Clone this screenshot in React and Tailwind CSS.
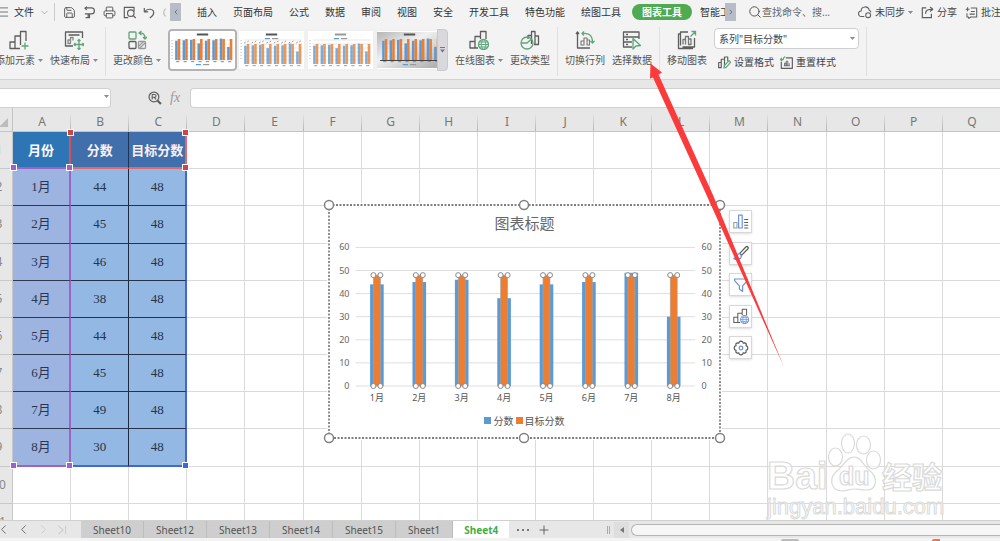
import { Fragment } from "react";
import { ChevronDown, ChevronLeft, ChevronRight, Menu, Plus, Printer, Save, Search } from "lucide-react";

const COLUMNS = ["A", "B", "C", "D", "E", "F", "G", "H", "I", "J", "K", "L", "M", "N", "O", "P", "Q"];

const SCORES = [
  { month: "1月", score: 44, target: 48 },
  { month: "2月", score: 45, target: 48 },
  { month: "3月", score: 46, target: 48 },
  { month: "4月", score: 38, target: 48 },
  { month: "5月", score: 44, target: 48 },
  { month: "6月", score: 45, target: 48 },
  { month: "7月", score: 49, target: 48 },
  { month: "8月", score: 30, target: 48 },
];

const Caret = ({ className = "" }) => (
  <svg width="5" height="3" viewBox="0 0 5 3" className={className} aria-hidden="true">
    <path d="M0 0h5L2.5 3z" fill="#8a8a8a" />
  </svg>
);

const Icon = ({ size = 20, children, className = "" }) => (
  <svg
    width={size}
    height={size}
    viewBox="0 0 20 20"
    fill="none"
    stroke="#5e5e5e"
    strokeWidth="1.3"
    strokeLinejoin="round"
    className={`shrink-0 ${className}`}
    aria-hidden="true"
  >
    {children}
  </svg>
);

const GREEN = "#5fa57c";

const AddElementIcon = () => (
  <Icon>
    <path d="M1 18.500V12h5v6.500zM6 18.500V6h5.500v9M11.500 12V1.500H17V11M6 18.500h5" />
    <path d="M16 12.500v7M12.500 16h7" stroke={GREEN} />
  </Icon>
);

const LayoutIcon = () => (
  <Icon>
    <path d="M9 16H1.500V2h17v6M4.500 5h11" />
    <path d="M4 13.500V10h2.500v3.500zM6.500 13.500v-6H9v3" stroke="#888" />
    <path d="M15 9.500v10M10 14.500h10M13.500 11l1.500-1.500 1.500 1.500M13.500 18l1.500 1.500 1.500-1.500M11.500 13L10 14.500l1.500 1.500M18.500 13l1.500 1.500-1.500 1.500" stroke={GREEN} />
  </Icon>
);

const ColorIcon = () => (
  <Icon>
    <rect x="2" y="2" width="7" height="7" rx="1" stroke={GREEN} />
    <path d="M12 3c4-.5 6 1.500 6 5.500M14.500 1L12 3l2.500 2M16 7l2 2 2-2" stroke={GREEN} />
    <rect x="2" y="11.500" width="7" height="7" rx="1" />
    <rect x="11.500" y="11.500" width="7" height="7" rx="1" stroke="#999" />
    <path d="M12 16l4.500-4.500M12.500 18.500l6-6" stroke="#999" />
  </Icon>
);

const GlobeChartIcon = ({ accent = GREEN }) => (
  <Icon>
    <path d="M9 18H1v-6.500h5M6 17.500v-11h5.500V9M11.500 8V1.500h5.500V9" />
    <circle cx="14.500" cy="14.500" r="5" stroke={accent} />
    <path d="M9.500 14.500h10M14.500 9.500c-3 3-3 7 0 10M14.500 9.500c3 3 3 7 0 10M10.500 12h8M10.500 17h8" stroke={accent} strokeWidth="1" />
  </Icon>
);

const ChangeTypeIcon = () => (
  <Icon>
    <path d="M8 9V5.500h3.500V14M11.500 12V1.500H15V14M15 6h3.500v8.500H14" />
    <circle cx="7" cy="13" r="6" stroke={GREEN} />
    <path d="M1 13h6l4.500-4" stroke={GREEN} />
  </Icon>
);

const SwapIcon = () => (
  <Icon>
    <path d="M2.500 2v16H15M1 4l1.500-2L4 4" />
    <path d="M6 15v-4h3v4zM9 15V8h3v7M12 15v-5h2.500v5z" stroke="#777" strokeWidth="1.100" />
    <path d="M7 3.500c7-1 10.500 2 10.500 9M9 1.500L7 3.500l2 2M15.500 11l2 2 2-2" stroke={GREEN} />
  </Icon>
);

const SelectDataIcon = () => (
  <Icon>
    <path d="M10 17H1.500V2h15.500v7M1.500 7H17M1.500 12H10M4 4.500h2M4 9.500h2M4 14.500h2" />
    <path d="M11 8.500v10.500l3-3 4.500-.5z" stroke={GREEN} fill="#f3f3f3" />
  </Icon>
);

const MoveIcon = () => (
  <Icon>
    <path d="M11 2H3.500v13.500M17.500 8v9H5.500M3.500 4H1.500v14.500h14V17" />
    <path d="M6 14.500v-5h2.500v5M8.500 14.500v-8h3v8M11.500 14.500V9H14v5.500z" stroke="#777" />
    <path d="M13.500 6.500L18.500 1.500M14.500 1.500h4v4" stroke={GREEN} />
  </Icon>
);

const FormatIcon = () => (
  <Icon size={13}>
    <path d="M1 18v-8h4v8zM5 18V5h5v11M10 14V1.500h5V8" strokeWidth="1.800" />
    <path d="M9 18.500l1-4 7-7.500 2.500 2.500-7 8z" stroke={GREEN} strokeWidth="1.800" />
  </Icon>
);

const ResetIcon = () => (
  <Icon size={13}>
    <path d="M9 3h10v16H2V9" strokeWidth="1.800" />
    <path d="M6 15h9M7 15v-4h2.500v4M9.500 15V8H12v7M14 15v-4" strokeWidth="1.300" />
    <path d="M1 5.500h4c0-3 1-4 3-4.500M3 3L.5 5.500 3 8" stroke={GREEN} strokeWidth="1.800" />
  </Icon>
);

const ToolButton = ({ label, icon: ToolIcon, menu }) => (
  <button className="flex shrink-0 flex-col items-center gap-0.5 pt-1.5 text-[10px] leading-4 text-[#555] whitespace-nowrap">
    <ToolIcon />
    <span className="flex items-center gap-[3px]">
      {label}
      {menu && <Caret />}
    </span>
  </button>
);

const Divider = () => <div className="mt-[3px] h-[49px] w-px shrink-0 bg-[#e0e0e0]" />;

// small preview of the clustered columns, used by the style gallery
const Preview = ({ variant }) => {
  const dark = variant === "dark";
  const legendTop = variant === "labels" || variant === "light";
  const opacity = legendTop ? 0.8 : 1;
  return (
    <svg viewBox="0 0 63 36" className="h-9 w-full" preserveAspectRatio="none" aria-hidden="true">
      <defs>
        <linearGradient id="previewShade" x1="0" y1="0" x2="1" y2="1">
          <stop offset="0" stopColor="#b5b5b5" />
          <stop offset="0.4" stopColor="#f0f0f0" />
          <stop offset="1" stopColor="#a8a8a8" />
        </linearGradient>
      </defs>
      <rect width="63" height="36" fill={dark ? "url(#previewShade)" : "#fff"} />
      <rect x="26" y="1.500" width="11" height="2" fill="#555" opacity={variant === "light" ? 0.6 : 1} />
      {[8, 12, 16, 20, 24, 28].map((y) => (
        <path key={y} d={`M5 ${y}h56`} stroke="#d9d9d9" strokeWidth="0.600" />
      ))}
      {!dark && <path d="M2 8v20" stroke="#bbb" strokeDasharray="1 2" />}
      {SCORES.map((row, i) => {
        const top = legendTop ? 12 : 7;
        const bottom = legendTop ? 32 : 28;
        const scale = (bottom - top) / 48;
        const x = 5 + i * 7.2;
        return (
          <g key={row.month} opacity={opacity}>
            <rect x={x} y={bottom - row.score * scale} width="2.500" height={row.score * scale} fill="#5b9bd5" />
            <rect x={x + 2.5} y={top} width="2.500" height={bottom - top} fill="#ed7d31" />
            {variant === "labels" && <path d={`M${x} ${top - 1}l1.5-1M${x + 3} ${top - 2}l1.5-1`} stroke="#666" strokeWidth="0.800" />}
            <rect x={x + 1} y={bottom + 1} width="3" height="1.200" fill="#999" />
          </g>
        );
      })}
      {dark && <path d="M3 28.500h58" stroke="#444" />}
      <rect x="25" y={legendTop ? 6 : 32} width="5" height="1.200" fill="#5b9bd5" />
      <rect x="32" y={legendTop ? 6 : 32} width="6" height="1.200" fill="#999" />
    </svg>
  );
};

const Gallery = () => (
  <div className="mt-[5px] flex h-[42px] w-[280px] shrink-0">
    <div className="flex min-w-0 flex-1 overflow-hidden bg-white">
      {["plain", "labels", "light", "dark"].map((variant, i) => (
        <button
          key={variant}
          aria-label={`样式${i + 1}`}
          className={`w-[69px] shrink-0 border-2 py-px ${i === 0 ? "rounded-sm border-[#b3b3b3] bg-white" : "border-[#f0f0f0] bg-white"}`}
        >
          <Preview variant={variant} />
        </button>
      ))}
    </div>
    <button aria-label="更多样式" className="flex w-[11px] items-center justify-center rounded-r border border-[#c9c9cd] bg-[#d9d9dd]">
      <svg width="5" height="6" viewBox="0 0 5 6" aria-hidden="true">
        <path d="M0 .5h5" stroke="#777" />
        <path d="M0 2.500h5L2.500 5.500z" fill="#777" />
      </svg>
    </button>
  </div>
);

const MENUS = ["插入", "页面布局", "公式", "数据", "审阅", "视图", "安全", "开发工具", "特色功能", "绘图工具"];

const MenuBar = () => (
  <div className="flex h-6 items-center overflow-hidden text-[10px] leading-4 whitespace-nowrap text-[#333]">
    <button className="flex items-center gap-1">
      <Menu size={14} strokeWidth={1.5} className="-ml-1 text-[#666]" />
      文件
      <ChevronDown size={11} strokeWidth={1.2} className="ml-[1px] text-[#777]" />
    </button>
    <div className="ml-1 h-[18px] w-px bg-[#ccc]" />
    <div className="ml-2 flex items-center gap-[7px] text-[#555]">
      <button aria-label="保存"><Save size={13} strokeWidth={1.7} /></button>
      <button aria-label="输出">
        <Icon size={13}>
          <path d="M3 3h10a4.500 4.500 0 0 1 0 9H3M6 1L3 3.500 6 6M8 12v6M4 18h6v-5" strokeWidth="1.800" />
        </Icon>
      </button>
      <button aria-label="打印"><Printer size={13} strokeWidth={1.7} /></button>
      <button aria-label="预览">
        <Icon size={13}>
          <path d="M8 18H2V2h15v6" strokeWidth="1.800" />
          <circle cx="12" cy="11" r="5" strokeWidth="1.800" />
          <path d="M15.500 14.500l4 4" strokeWidth="1.800" />
        </Icon>
      </button>
      <button aria-label="撤销">
        <Icon size={13}>
          <path d="M2 3v6h6M2.500 9c4-6 14-5 14 1.500 0 4-3 6-6 8" strokeWidth="1.800" />
        </Icon>
      </button>
      <button aria-label="恢复" className="w-[3px] overflow-hidden">
        <Icon size={13}>
          <path d="M4 4c-4 4-4 9 0 12" stroke="#bbb" strokeWidth="1.800" />
        </Icon>
      </button>
    </div>
    <button aria-label="向左" className="ml-1 flex h-[18px] w-[11px] shrink-0 items-center justify-center bg-[#b8bcc6] text-[#555]">
      <ChevronLeft size={8} />
    </button>
    <nav className="ml-2 flex items-center">
      {MENUS.map((name) => (
        <button key={name} className="px-2">{name}</button>
      ))}
      <button className="ml-[3px] rounded-full bg-[#4faa50] px-2.5 font-bold text-white">图表工具</button>
      <button className="w-[33px] overflow-hidden pl-2 text-left">智能工</button>
    </nav>
    <button aria-label="向右" className="flex h-[18px] w-[11px] shrink-0 items-center justify-center bg-[#b8bcc6] text-[#555]">
      <ChevronRight size={8} />
    </button>
    <label className="ml-3 flex items-center">
      <Search size={14} strokeWidth={1.7} className="text-[#555]" />
      <input aria-label="查找命令" placeholder="查找命令、搜..." className="w-[85px] bg-transparent placeholder:text-[#666] outline-none" />
    </label>
    <div className="-mr-px ml-auto flex shrink-0 items-center gap-2 text-[#444]">
      <button className="flex items-center gap-[3px]">
        <Icon size={14}>
          <path d="M9 16.500H5a4 4 0 0 1-.5-8c0-7 10-8 11.500-1 1.500.5 2 1.500 2.500 3" strokeWidth="1.500" />
          <circle cx="14.500" cy="14.500" r="3.500" strokeWidth="1.500" />
        </Icon>
        未同步
        <Caret />
      </button>
      <button className="flex items-center gap-[3px]">
        <Icon size={13}>
          <path d="M8 3H2v15h14v-6M7 12c0-5 3-7 10-7M14 1.500L18 5l-4 3.500" strokeWidth="1.800" />
        </Icon>
        分享
      </button>
      <button className="flex items-center gap-[3px]">
        <Icon size={13}>
          <path d="M9 3h9v14H9l-3 2-1-2H3v-6M1 5h6M4 2v6M9 8.500h6M7 12.500h8" strokeWidth="1.600" />
        </Icon>
        批注
      </button>
    </div>
  </div>
);

const Ribbon = () => (
  <div className="flex h-14 gap-[7px] overflow-hidden border-b border-[#d2d2d2] pb-px">
    <div className="-ml-[5px] flex gap-[7px]">
      <ToolButton label="添加元素" icon={AddElementIcon} menu />
      <ToolButton label="快速布局" icon={LayoutIcon} menu />
    </div>
    <Divider />
    <ToolButton label="更改颜色" icon={ColorIcon} menu />
    <Gallery />
    <ToolButton label="在线图表" icon={GlobeChartIcon} menu />
    <ToolButton label="更改类型" icon={ChangeTypeIcon} />
    <Divider />
    <ToolButton label="切换行列" icon={SwapIcon} />
    <ToolButton label="选择数据" icon={SelectDataIcon} />
    <Divider />
    <ToolButton label="移动图表" icon={MoveIcon} />
    <div className="flex w-[145px] shrink-0 flex-col gap-[5px] pt-1 text-[10px] leading-4 text-[#444]">
      <div className="relative">
        <select aria-label="图表元素" className="h-[21px] w-full appearance-none rounded border border-[#cfcfcf] bg-white px-1">
          <option>系列"目标分数"</option>
        </select>
        <Caret className="pointer-events-none absolute top-[9px] right-1" />
      </div>
      <div className="flex gap-1.5 pl-1 whitespace-nowrap">
        <button className="flex items-center gap-[3px]"><FormatIcon />设置格式</button>
        <button className="flex items-center gap-[3px]"><ResetIcon />重置样式</button>
      </div>
    </div>
    <Divider />
  </div>
);

const FormulaBar = () => (
  <div className="flex h-7 items-center bg-[#e7e7e7] pt-2">
    <div className="relative w-[111px]">
      <input aria-label="名称框" className="h-5 w-full rounded-r border border-l-0 border-[#d0d0d0] bg-white" />
      <Caret className="absolute top-[9px] right-[2px]" />
    </div>
    <button aria-label="查找函数" className="ml-[37px]">
      <Icon size={14}>
        <circle cx="8.500" cy="8.500" r="7" strokeWidth="1.700" />
        <path d="M13.500 13.500l5 5" strokeWidth="3" />
        <path d="M6 12V5h3.500a2 2 0 0 1 0 4H6M9 9l2.500 3M5 9h2" strokeWidth="1.500" />
      </Icon>
    </button>
    <label htmlFor="formula" className="ml-2 w-5 font-['Liberation_Serif',serif] text-sm leading-5 text-[#999] italic">fx</label>
    <input id="formula" className="h-5 min-w-0 flex-1 rounded-l border border-r-0 border-[#d0d0d0] bg-white" />
  </div>
);

const Handle = ({ className }) => <span className={`absolute z-10 size-[5px] outline-1 outline-white ${className}`} />;

const Sheet = () => (
  <table className="-ml-4 h-[433px] w-[calc(100%+17px)] table-fixed border-separate border-spacing-0">
    <thead>
      <tr className="h-6 bg-[#e7e7e7] text-[12px] leading-4 text-[#777]">
        <th className="relative h-6 w-[29px] border-r border-b border-[#c4c4c4] p-0">
          <svg width="9" height="9" viewBox="0 0 9 9" className="absolute right-1 bottom-1" aria-hidden="true">
            <path d="M9 0v9H0z" fill="#bdbdbd" />
          </svg>
        </th>
        {COLUMNS.map((name) => (
          <th key={name} className="relative h-6 border-b border-[#c4c4c4] p-0 pt-1 font-normal">
            {name}
            <span className="absolute right-0 bottom-0 h-4 w-px bg-linear-to-b from-[#e0e0e0] to-[#b5b5b5]" />
          </th>
        ))}
      </tr>
    </thead>
    <tbody className="text-center text-[13px] leading-4">
      {Array.from({ length: 11 }, (_, r) => {
        const row = SCORES[r - 1];
        const last = r === 8;
        return (
          <tr key={r} className="h-[37px]">
            <th className="border-r border-b border-[#c8c8c8] bg-[#e7e7e7] p-0 pl-0.5 text-[12px] font-normal text-[#888]">{r + 1}</th>
            {r === 0 && (
              <Fragment>
                <td className="relative border-r-2 border-b-2 border-r-[#d0545a] border-b-[#9b63c9] bg-[#2e75b6] p-0 font-bold text-white">
                  月份
                  <Handle className="-bottom-[3px] -left-[2px] bg-[#9b63c9]" />
                  <Handle className="-right-[3px] -bottom-[3px] bg-[#9b63c9]" />
                </td>
                <td className="relative border-r border-b-2 border-r-[#1f3455] border-b-[#dd6a6c] bg-[#406fab] p-0 font-bold text-[#fdeff0]">
                  分数
                  <Handle className="-top-[2px] -left-[3px] bg-[#cf4449]" />
                </td>
                <td className="relative border-r-2 border-b-2 border-[#dd6a6c] bg-[#406fab] p-0 font-bold whitespace-nowrap text-[#fdeff0]">
                  目标分数
                  <Handle className="-top-[2px] -right-[3px] bg-[#cf4449]" />
                  <Handle className="-right-[3px] -bottom-[3px] bg-[#cf4449]" />
                </td>
              </Fragment>
            )}
            {row && (
              <Fragment>
                <td className={`relative border-r-2 bg-[#9db4e0] p-0 font-['Liberation_Serif','Noto_Sans_CJK_SC',serif] text-[#2c3550] border-r-[#9b63c9] ${last ? "border-b-2 border-b-[#9b63c9]" : "border-b border-b-[#2f3a52]"}`}>
                  {row.month}
                  {last && <Handle className="-bottom-[3px] -left-[2px] bg-[#9b63c9]" />}
                  {last && <Handle className="-right-[3px] -bottom-[3px] bg-[#9b63c9]" />}
                </td>
                <td className={`border-r border-r-[#1f2a3f] bg-[#93b8e3] p-0 font-['Liberation_Serif',serif] text-[#26334a] ${last ? "border-b-2 border-b-[#3f68d6]" : "border-b border-b-[#263248]"}`}>
                  {row.score}
                </td>
                <td className={`relative border-r-2 border-r-[#3f68d6] bg-[#93b8e3] p-0 font-['Liberation_Serif',serif] text-[#26334a] ${last ? "border-b-2 border-b-[#3f68d6]" : "border-b border-b-[#263248]"}`}>
                  {row.target}
                  {last && <Handle className="-right-[3px] -bottom-[3px] bg-[#3f68d6]" />}
                </td>
              </Fragment>
            )}
            {COLUMNS.slice(r < 9 ? 3 : 0).map((name) => (
              <td key={name} className="border-r border-b border-[#dadada] bg-white p-0" />
            ))}
          </tr>
        );
      })}
    </tbody>
  </table>
);

const BASE = 181;
const STEP = 23.1;
const yOf = (value) => BASE - (value / 10) * STEP;

const Chart = () => (
  <svg width="391" height="233" viewBox="0 0 391 233" className="overflow-visible" role="img" aria-label="图表标题">
    <rect width="391" height="233" fill="#fff" stroke="#fff" strokeWidth="4" />
    <rect width="391" height="233" fill="none" stroke="#555" strokeWidth="1.300" strokeDasharray="2 1.500" />
    <text x="195.500" y="24" textAnchor="middle" fontSize="15" fill="#666">图表标题</text>
    {[0, 10, 20, 30, 40, 50, 60].map((tick) => (
      <g key={tick} fontSize="9" fill="#666">
        <path d={`M26.500 ${yOf(tick)}H366`} stroke="#dedede" />
        <text x="20.500" y={yOf(tick) + 3} textAnchor="end">{tick}</text>
        <text x="372.500" y={yOf(tick) + 3}>{tick}</text>
      </g>
    ))}
    {SCORES.map((row, i) => {
      const x = 47.9 + i * 42.4;
      const top = yOf(row.target);
      return (
        <g key={row.month}>
          <rect x={x - 6.8} y={yOf(row.score)} width="13.600" height={BASE - yOf(row.score)} fill="#5b9bd5" />
          <rect x={x - 3.5} y={top} width="7" height={BASE - top} fill="#ed7d31" stroke="#a9a39f" strokeWidth="0.600" />
          {[top, BASE].map((y) =>
            [x - 3.5, x + 3.5].map((cx) => (
              <circle key={`${cx}-${y}`} cx={cx} cy={y} r="2.500" fill="#fff" stroke="#888" />
            ))
          )}
          <text x={x} y="196" textAnchor="middle" fontSize="9" fill="#555">{row.month}</text>
        </g>
      );
    })}
    <g fontSize="10" fill="#555">
      <rect x="155" y="212" width="7" height="7" fill="#5b9bd5" />
      <text x="164.500" y="220">分数</text>
      <rect x="187" y="212" width="7" height="7" fill="#ed7d31" />
      <text x="195.500" y="220">目标分数</text>
    </g>
    {[[0, 0], [195, 0], [391, 0], [0, 233], [195, 233], [391, 233]].map(([cx, cy]) => (
      <circle key={`${cx}-${cy}`} cx={cx} cy={cy} r="4.500" fill="#fff" stroke="#808080" strokeWidth="1.500" />
    ))}
  </svg>
);

const BLUE = "#6a92e0";

const CHART_TOOLS = [
  {
    label: "图表元素",
    icon: (
      <Icon size={16}>
        <path d="M1 17.500v-7h4v7z" stroke="#999" />
        <path d="M7 17.500v-16h4.500v16z" stroke={BLUE} strokeWidth="1.500" />
        <path d="M14 7h5M14 10.500h5M14 14h5M14 17.500h5" />
      </Icon>
    ),
  },
  {
    label: "图表样式",
    icon: (
      <Icon size={16}>
        <path d="M8.500 10.500l7.500-8c2-1.500 4 .5 2.500 2.500l-8 8z" strokeWidth="1.600" />
        <path d="M8.500 10.500c-4 0-3 5-7.500 6.500 4 2 9.500 1 9.500-4z" stroke={BLUE} strokeWidth="1.500" />
      </Icon>
    ),
  },
  {
    label: "图表筛选",
    icon: (
      <Icon size={16}>
        <path d="M2 2.500h16v2L12 11v7l-4-3v-4L2 4.500z" stroke={BLUE} strokeWidth="1.500" />
      </Icon>
    ),
  },
  { label: "在线图表", icon: <span className="[&>svg]:size-4"><GlobeChartIcon accent={BLUE} /></span> },
  {
    label: "设置",
    icon: (
      <Icon size={16}>
        <path d="M8 2l2-.5 2 .5.8 2 2.200-.5 1.700 1.500-.5 2.200L18 8l.5 2-.5 2-1.800.800.3 2.200L15 16.500l-2.200-.5L12 18l-2 .5L8 18l-.8-2-2.200.5L3.500 15l.3-2.200L2 12l-.5-2L2 8l1.800-.8L3.500 5 5 3.500l2.200.5z" strokeWidth="1.500" />
        <circle cx="10" cy="10" r="2.300" stroke={BLUE} strokeWidth="1.500" />
      </Icon>
    ),
  },
];

const Watermark = () => (
  <svg width="190" height="90" viewBox="0 0 190 90" className="overflow-visible" fill="#fff" fillOpacity="0.600" stroke="#dadada" strokeWidth="1.200">
    <g fontFamily="Liberation Sans, sans-serif">
      <text x="0" y="58" fontSize="39" fontWeight="bold">Bai</text>
      <ellipse cx="68.500" cy="46" rx="7" ry="9" transform="translate(0 -20)" />
      <ellipse cx="81" cy="12.500" rx="6.500" ry="9.500" />
      <ellipse cx="96.500" cy="14" rx="7" ry="9" />
      <ellipse cx="106.500" cy="29" rx="7" ry="9" />
      <path d="M87 26c7 0 9 8 15 13 9 7 9 20-3 20-5 0-8-1-12-1s-7 2-12 2c-13-1-13-14-4-21 6-5 9-13 16-13z" />
      <text x="72" y="54" fontSize="25" fontWeight="bold">du</text>
      <text x="0" y="83" fontSize="22" strokeWidth="1">jingyan.baidu.com</text>
    </g>
    <text x="115" y="57" fontSize="30" fontWeight="bold" fontFamily="Noto Sans CJK SC, sans-serif">经验</text>
  </svg>
);

const TABS = ["Sheet10", "Sheet12", "Sheet13", "Sheet14", "Sheet15", "Sheet1", "Sheet4"];

const SheetTabs = () => (
  <div className="flex h-[18px] shrink-0 items-stretch border-t border-[#d0d0d0] bg-[#e7e7e7] text-[10px] leading-4 text-[#555]">
    <div className="flex w-[81px] shrink-0 items-center gap-[5px] text-[#666]">
      <button aria-label="第一张" className="-ml-1"><ChevronLeft size={15} strokeWidth={1.5} /></button>
      <button aria-label="上一张"><ChevronLeft size={15} strokeWidth={1.5} /></button>
      <button aria-label="下一张" className="text-[#ccc]"><ChevronRight size={15} strokeWidth={1.5} /></button>
      <button aria-label="最后一张" className="text-[#ccc]">
        <Icon size={12}>
          <path d="M4 3l8 7-8 7M16 3v14" stroke="#ccc" strokeWidth="1.700" />
        </Icon>
      </button>
    </div>
    {TABS.map((name) => (
      <button
        key={name}
        className={`shrink-0 ${name === "Sheet4" ? "bg-white px-[11px] font-bold text-[#3fae49]" : "border-r border-[#bdbdbd] bg-[#cecece] px-3"}`}
      >
        {name}
      </button>
    ))}
    <button aria-label="更多工作表" className="ml-2 flex w-3 items-center justify-between">
      <span className="size-0.5 bg-[#777]" />
      <span className="size-0.5 bg-[#777]" />
      <span className="size-0.5 bg-[#777]" />
    </button>
    <button aria-label="新建工作表" className="ml-2"><Plus size={14} strokeWidth={1.5} /></button>
    <div className="ml-auto flex w-[39.300%] items-center">
      <div className="h-2 w-[3px] border-x border-[#aaa]" />
      <button aria-label="向左滚动" className="ml-1 flex h-4 w-[15px] items-center justify-center bg-[#dedede]">
        <svg width="4" height="6" viewBox="0 0 4 6" aria-hidden="true">
          <path d="M4 0v6L0 3z" fill="#777" />
        </svg>
      </button>
      <div className="ml-0.5 h-3 flex-1 rounded-l-full border border-r-0 border-[#b5b5b5] bg-[#f6f6f6]" />
    </div>
  </div>
);

export default function App() {
  return (
    <div className="relative flex h-screen flex-col overflow-hidden bg-[#f3f3f3] font-['Noto_Sans','Noto_Sans_CJK_SC',sans-serif]">
      <header className="shrink-0">
        <MenuBar />
        <Ribbon />
        <FormulaBar />
      </header>

      <main className="relative min-h-0 flex-1 overflow-hidden">
        <Sheet />
        <div className="absolute top-[97px] left-[329px] flex">
          <Chart />
          <div className="mt-[5px] ml-[9px] flex h-[149px] flex-col justify-between">
            {CHART_TOOLS.map((tool) => (
              <button
                key={tool.label}
                aria-label={tool.label}
                className="flex size-[23px] items-center justify-center border border-[#d8d8d8] bg-white shadow"
              >
                {tool.icon}
              </button>
            ))}
          </div>
        </div>
        <div className="pointer-events-none absolute top-[323px] left-[767px]">
          <Watermark />
        </div>
      </main>

      <SheetTabs />
      <footer className="flex h-[3px] shrink-0 items-end bg-[#f3f3f3] pr-[60px]">
        <span className="ml-auto h-0.5 w-[18px] rounded-t bg-[#bbb]" />
        <span className="ml-[133px] h-0.5 w-2 rounded-tl bg-[#f2724a]" />
      </footer>

      <svg width="136" height="306" viewBox="0 0 136 306" className="pointer-events-none absolute top-[62px] left-[649px]" aria-hidden="true">
        <path d="M1.500 1.500L13 10.500l-3.500 2L64 133l71 172L57.500 133 4 15.500l-3 1z" fill="#fb3b3b" />
      </svg>
    </div>
  );
}
